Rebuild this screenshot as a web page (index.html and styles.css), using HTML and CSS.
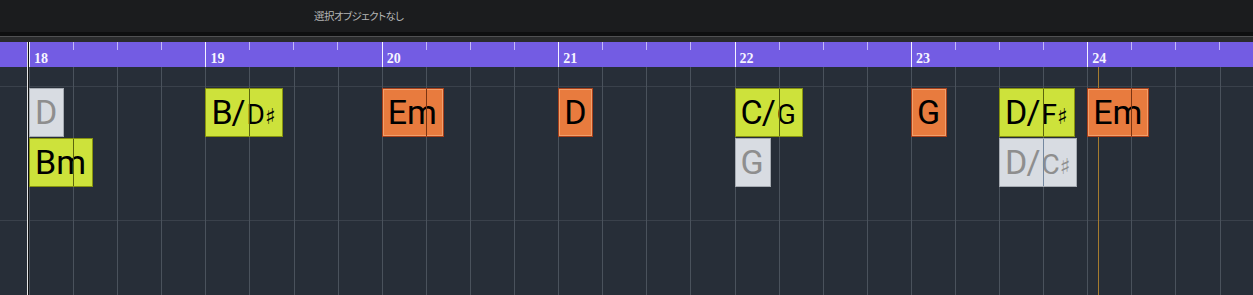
FILE: index.html
```html
<!DOCTYPE html>
<html lang="ja">
<head>
  <meta charset="UTF-8" />
  <title>Chord Track</title>
  <link rel="stylesheet" href="styles.css">
</head>
<body>
  <div class="topbar">
    <span class="status">選択オブジェクトなし</span>
  </div>
  <div class="sep"></div>

  <div class="timeline">
    <div class="ruler">
      <div class="bar"><span>18</span></div>
      <div class="bar"><span>19</span></div>
      <div class="bar"><span>20</span></div>
      <div class="bar"><span>21</span></div>
      <div class="bar"><span>22</span></div>
      <div class="bar"><span>23</span></div>
      <div class="bar"><span>24</span></div>
    </div>

    <div class="lanes">
      <div class="gridlines">
        <div class="beat"></div><div class="beat"></div><div class="beat"></div><div class="beat"></div>
        <div class="beat"></div><div class="beat"></div><div class="beat"></div><div class="beat"></div>
        <div class="beat"></div><div class="beat"></div><div class="beat"></div><div class="beat"></div>
        <div class="beat"></div><div class="beat"></div><div class="beat"></div><div class="beat"></div>
        <div class="beat"></div><div class="beat"></div><div class="beat"></div><div class="beat"></div>
        <div class="beat"></div><div class="beat"></div><div class="beat"></div><div class="beat"></div>
        <div class="beat"></div><div class="beat"></div><div class="beat"></div><div class="beat"></div>
      </div>
      <div class="cursor"></div>

      <div class="chords">
        <div class="chord ghost" style="grid-column: 1; grid-row: 1">D</div>
        <div class="chord lime" style="grid-column: 1; grid-row: 2">Bm</div>
        <div class="chord lime" style="grid-column: 5; grid-row: 1">B<span class="slash">/</span><span class="bass">D</span><span class="sharp">♯</span></div>
        <div class="chord orange" style="grid-column: 9; grid-row: 1">Em</div>
        <div class="chord orange" style="grid-column: 13; grid-row: 1">D</div>
        <div class="chord lime" style="grid-column: 17; grid-row: 1">C<span class="slash">/</span><span class="bass">G</span></div>
        <div class="chord ghost" style="grid-column: 17; grid-row: 2">G</div>
        <div class="chord orange" style="grid-column: 21; grid-row: 1">G</div>
        <div class="chord lime" style="grid-column: 23; grid-row: 1">D<span class="slash">/</span><span class="bass">F</span><span class="sharp">♯</span></div>
        <div class="chord ghost" style="grid-column: 23; grid-row: 2">D<span class="slash">/</span><span class="bass">C</span><span class="sharp">♯</span></div>
        <div class="chord orange" style="grid-column: 25; grid-row: 1">Em</div>
      </div>
    </div>

    <div class="playhead"></div>
  </div>
</body>
</html>
```

FILE: styles.css
```css
* {
  box-sizing: border-box;
}
body {
  margin: 0;
  width: 1253px;
  height: 295px;
  overflow: hidden;
  background: #272e38;
  font-family: 'Liberation Sans', Arial, sans-serif;
}

/* status bar */
.topbar {
  height: 36px;
  background: #1b1c1e;
  border-bottom: 4px solid #0e0f10;
  padding: 6px 0 0 314px;
}
.status {
  font-family: 'Noto Sans CJK JP', sans-serif;
  font-size: 10.5px;
  line-height: 14px;
  letter-spacing: -0.6px;
  color: #b4b4b4;
  font-feature-settings: "palt";
}
.sep {
  height: 6px;
  background: #2a2b2d;
  border-top: 1px solid #505153;
}

.timeline {
  position: relative;
}

/* ruler */
.ruler {
  display: flex;
  height: 25px;
  padding-left: 29px;
  background: #735ce3;
  overflow: hidden;
}
.bar {
  flex: 0 0 176.4px;
  border-left: 1px solid #f4f2ff;
  padding: 8px 0 0 4px;
  line-height: 16px;
  background-image:
    linear-gradient(#c3b8f7, #c3b8f7),
    linear-gradient(#c3b8f7, #c3b8f7),
    linear-gradient(#c3b8f7, #c3b8f7);
  background-repeat: no-repeat;
  background-size: 1px 8px;
  background-position: 43px 0, 87px 0, 131px 0;
}
.bar span {
  font-family: 'Liberation Serif', serif;
  font-weight: bold;
  font-size: 14px;
  color: #f6f4ff;
}

/* lanes */
.lanes {
  position: relative;
  height: 228px;
  background-color: #272e38;
  background-image:
    linear-gradient(#3a414b, #3a414b),
    linear-gradient(#3a414b, #3a414b);
  background-repeat: no-repeat;
  background-size: 100% 1px;
  background-position: 0 19px, 0 153px;
  overflow: hidden;
}
.gridlines {
  position: absolute;
  top: 0;
  bottom: 0;
  left: 29px;
  display: flex;
}
.beat {
  flex: 0 0 44.1px;
  border-left: 1px solid #4a525c;
}
.cursor {
  position: absolute;
  top: 0;
  bottom: 0;
  left: 1098px;
  width: 1px;
  background: #a57b2e;
}

.chords {
  position: relative;
  display: grid;
  grid-template-columns: repeat(28, 44.1px);
  grid-template-rows: 50px 50px;
  padding: 21px 0 0 29px;
}
.chord {
  position: relative;
  justify-self: start;
  height: 49px;
  padding: 0 6px 0 5px;
  border: 1px solid;
  font-family: Roboto, 'Liberation Sans', sans-serif;
  font-size: 34px;
  line-height: 47px;
  white-space: nowrap;
  overflow: hidden;
  color: #000;
}
.chord::after {
  content: "";
  position: absolute;
  left: 43px;
  top: 0;
  bottom: 0;
  width: 1px;
}
.slash {
  margin: 0 -1px;
}
.bass {
  font-size: 28px;
  margin-left: 2px;
}
.sharp {
  font-family: 'DejaVu Sans', sans-serif;
  font-size: 22px;
}

.lime {
  background: #cde23b;
  border-color: #87930f;
}
.lime::after {
  background: #5b650c;
}
.orange {
  background: #e87b3e;
  border-color: #a8401a;
  box-shadow: inset 0 0 0 1px #f2a06c;
}
.orange::after {
  background: #7a3412;
}
.ghost {
  background: #d8dce2;
  border-color: #a6abb2;
  color: #8e8e8e;
}
.ghost::after {
  background: #7488a0;
}

.playhead {
  position: absolute;
  top: 0;
  bottom: 0;
  left: 27px;
  width: 2px;
  border-left: 1px solid #e6e6e6;
  background: #101112;
}
```
